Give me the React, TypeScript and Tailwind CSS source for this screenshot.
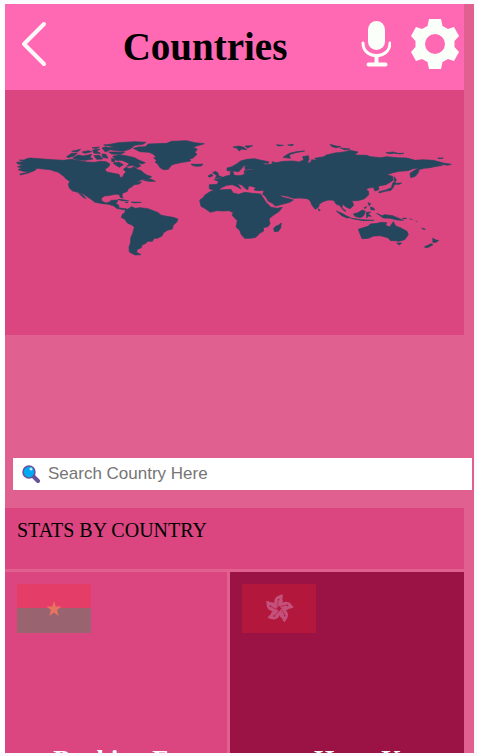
function WorldMap() {
  return (
    <svg viewBox="15 0 1377 390" className="block w-full" fill="#24475d" stroke="#24475d" strokeWidth="2" strokeLinejoin="round" role="img" aria-label="World map">
      {/* North and Central America */}
      <path d="M50 97 72 95 58 90 72 90 80 86 90 84 130 87 160 89 190 91 215 88 240 92 260 96 285 97 300 94 318 95 330 102 326 110 315 118 320 126 340 130 357 133 361 143 368 141 372 132 378 126 370 118 378 112 390 116 402 110 412 118 424 122 432 130 440 135 455 140 445 147 430 148 420 151 412 157 425 155 418 162 402 164 396 170 385 176 382 184 368 190 366 196 369 204 362 203 357 193 345 193 330 196 313 198 304 205 306 214 318 219 328 216 334 211 354 210 348 222 356 225 357 234 378 236 370 239 350 235 340 227 325 223 308 221 285 217 275 209 262 200 250 192 235 187 218 183 208 174 205 163 210 153 200 147 190 138 175 127 150 119 130 117 112 115 103 122 82 130 60 135 60 132 88 126 70 124 54 119 66 114 52 110 70 105 52 101Z" />
      <path d="M235 188 248 194 258 206 247 200ZM195 143 210 150 206 152ZM430 150 452 147 466 154 445 154ZM354 208 370 209 386 213 366 212ZM394 216 424 217 404 219ZM375 217 384 218Z" />
      {/* Arctic archipelago */}
      <path d="M200 80 215 70 232 70 222 78 204 83ZM218 84 235 75 250 78 275 73 270 82 279 87 255 91 232 89ZM215 64 242 58 232 66ZM246 66 265 62 275 65 255 70ZM278 60 300 57 290 64 302 70 282 70ZM282 77 298 75 308 87 290 88ZM306 54 318 50 329 60 316 66ZM306 72 318 73 324 85 308 82ZM276 53 298 51 288 56ZM311 45 335 42 355 38 405 35 438 37 428 43 404 46 392 56 370 64 350 62 330 59 318 52 345 53 330 48ZM326 66 348 66 374 67 362 73 335 72ZM338 79 358 74 382 78 404 83 416 90 436 98 426 102 414 98 422 108 412 113 398 106 380 109 388 101 376 95 364 91 348 91ZM340 100 356 96 370 104 358 112 348 106ZM335 85 344 88 344 97 335 94Z" />
      {/* Greenland and Iceland */}
      <path d="M400 55 416 51 436 50 445 42 500 40 515 34 560 32 585 38 613 41 600 45 590 48 580 52 592 58 585 67 591 73 579 84 569 87 572 93 548 97 527 101 515 105 505 118 490 119 479 112 474 103 465 96 470 91 461 84 469 82 459 72 447 67 420 65ZM573 102 590 103 609 102 604 108 588 109 577 106Z" />
      {/* South America */}
      <path d="M375 238 384 237 395 230 406 235 420 233 444 236 462 243 475 248 482 255 500 259 519 262 534 267 530 277 520 285 517 297 502 301 491 308 486 318 472 325 463 325 457 334 443 334 438 340 426 345 424 353 413 358 409 366 423 374 405 375 388 366 387 352 392 337 392 324 398 310 403 292 397 286 382 279 374 267 364 263 367 253 375 248Z" />
      {/* Eurasia */}
      <path d="M628 164 652 163 655 154 643 149 662 145 676 139 691 135 691 125 698 124 703 136 720 137 734 133 732 123 744 120 766 120 748 117 736 119 734 111 743 105 730 108 724 117 716 125 699 123 681 122 681 114 696 110 711 101 722 93 741 88 763 86 784 91 806 95 805 100 786 99 797 104 817 102 816 95 828 98 850 94 880 93 897 96 911 90 908 80 925 77 927 88 922 99 931 98 935 89 951 91 944 85 972 80 979 75 1005 69 1037 65 1050 61 1074 66 1064 75 1100 76 1112 80 1142 83 1160 80 1192 83 1220 84 1246 91 1267 89 1300 91 1330 99 1354 103 1342 106 1319 101 1328 106 1304 110 1290 113 1272 115 1256 119 1256 126 1246 139 1232 143 1230 130 1244 121 1256 114 1239 116 1224 122 1197 124 1179 128 1160 134 1178 139 1180 151 1158 164 1136 168 1136 179 1125 183 1120 172 1106 174 1098 178 1106 184 1106 195 1092 207 1073 212 1056 212 1061 226 1050 236 1038 231 1028 222 1026 233 1038 244 1032 242 1018 226 1009 223 1001 211 984 210 969 215 958 222 956 231 946 238 936 226 931 213 922 206 900 204 880 205 862 199 838 195 848 202 862 205 880 210 869 217 847 223 826 228 817 220 805 214 797 200 788 193 792 181 775 182 762 180 768 173 752 168 745 169 744 179 738 177 725 165 712 161 720 171 723 177 711 170 697 164 680 166 664 173 657 180 641 181 628 176Z" />
      <path d="M638 128 646 124 654 129 656 137 669 142 645 145 651 137ZM624 138 635 132 639 137 628 142ZM699 51 716 48 731 52 740 59 725 57 718 63 711 55ZM735 48 758 47 742 54ZM829 44 850 46 836 48ZM863 45 880 43 878 47ZM849 82 858 76 869 70 889 65 914 63 887 68 868 74 871 85ZM990 43 1008 48 1023 50 1008 53 996 50ZM1021 54 1050 57 1035 60ZM1158 68 1180 66 1190 69 1168 71ZM1186 70 1212 70 1200 72ZM1313 84 1330 84 1320 86Z" />
      {/* Africa and Madagascar */}
      <path d="M632 184 646 181 669 179 693 178 699 189 716 193 734 187 758 190 782 192 787 200 799 218 813 232 831 235 847 232 838 244 817 258 807 267 810 281 804 290 790 293 791 303 779 310 768 322 751 325 734 325 724 314 719 301 708 291 712 272 701 261 696 255 700 248 687 242 669 243 650 242 631 247 616 236 603 229 599 211 609 203 615 195ZM844 279 842 294 835 304 823 305 821 295 827 289 835 286Z" />
      {/* Japan and southeast Asia */}
      <path d="M1183 140 1189 150 1184 160 1205 159 1198 163 1184 163 1180 172 1173 181 1155 184 1137 189 1137 185 1158 180 1174 173 1178 160 1184 154ZM1009 243 1024 249 1040 258 1052 263 1041 264 1025 257ZM1053 265 1085 269 1122 271 1089 272ZM1060 252 1074 248 1087 240 1096 244 1091 257 1081 263 1065 259ZM1099 247 1112 246 1104 252 1114 259 1104 258 1100 264ZM1104 218 1112 221 1108 228ZM1111 231 1121 234 1124 240 1113 239ZM1093 232 1100 230 1095 236ZM1130 250 1146 257 1155 254 1178 257 1192 263 1210 271 1191 270 1171 265 1150 264ZM1208 264 1220 265 1210 267ZM955 236 961 241 957 243Z" />
      {/* Oceania */}
      <path d="M1075 298 1093 292 1104 289 1111 282 1132 280 1143 277 1160 278 1157 286 1169 291 1180 275 1187 288 1203 294 1221 304 1225 314 1214 329 1197 334 1185 332 1172 332 1163 323 1141 317 1121 318 1105 325 1086 326 1081 314ZM1190 339 1205 339 1198 345ZM1298 325 1310 331 1316 331 1310 336 1299 338ZM1274 350 1294 341 1299 344 1285 352 1275 353ZM1265 294 1276 298 1270 298ZM1228 266 1238 269M1247 273 1252 275" />
    </svg>
  );
}

function BurkinaFlag() {
  return (
    <svg viewBox="0 0 74 49" className="block h-[49px] w-[74px]" role="img" aria-label="Flag of Burkina Faso">
      <path fill="#e43e68" d="M0 0h74v24H0z" />
      <path fill="#99646f" d="M0 24h74v25H0z" />
      <path fill="#e77360" d="m37 17 1.8 5.500h5.800L40 26l1.700 6-4.700-3.500L32.300 32l1.700-6-4.600-3.500h5.800Z" />
    </svg>
  );
}

function HongKongFlag() {
  return (
    <svg viewBox="0 0 74 49" className="block h-[49px] w-[74px]" role="img" aria-label="Flag of Hong Kong">
      <path fill="#b3173b" d="M0 0h74v49H0z" />
      <g transform="translate(37 24.5)">
        {[4, 76, 148, 220, 292].map((angle) => (
          <g key={angle} transform={`rotate(${angle})`}>
            <path fill="#c4517b" d="M-1-1C-7-4-6-11-1-13c2-1 3-1 3-2 2 3 0 4 1 6 1 4 0 5-2 6-1 1-1 1-2 2Z" />
            <path d="M0 0C-2-3-2-6-1-9" fill="none" stroke="#b3173b" strokeWidth=".6" />
            <circle cx="-1" cy="-9" r=".8" fill="#b3173b" />
          </g>
        ))}
      </g>
    </svg>
  );
}

function BackIcon() {
  return (
    <svg viewBox="0 0 26 46" className="h-[46px] w-[26px]" fill="none" stroke="#fffafa" strokeWidth="4" strokeLinecap="round" strokeLinejoin="round" aria-hidden="true">
      <path d="M23 3 3 23l20 20" />
    </svg>
  );
}

function MicIcon() {
  return (
    <svg viewBox="0 0 30 46" className="h-[46px] w-[30px]" fill="none" stroke="#fbfffa" strokeWidth="3" strokeLinecap="round" aria-hidden="true">
      <rect x="7" y="0" width="17" height="29" rx="8.5" fill="#fbfffa" stroke="none" />
      <path d="M2 22c0 8 6 12.500 13.500 12.500S29 30 29 22" />
      <path d="M15.500 35v8M7.500 43.500h17" strokeWidth="4" />
    </svg>
  );
}

function GearIcon() {
  return (
    <svg viewBox="0 0 48 50" className="h-[50px] w-12" fill="#fbfffa" aria-hidden="true">
      <path fillRule="evenodd" d="M18 0h12l1.500 7 5.500 3 6-2 5 9-4.500 5v6l4.500 5-5 9-6-2-5.500 3L30 50H18l-1.500-7-5.500-3-6 2-5-9 4.500-5v-6L0 17l5-9 6 2 5.500-3Zm6 15a10 10 0 1 0 0 20 10 10 0 1 0 0-20Z" />
    </svg>
  );
}

function SearchIcon() {
  return (
    <svg viewBox="0 0 18 18" className="size-[18px] shrink-0" aria-hidden="true">
      <path d="m11 11 5 5" stroke="#65529a" strokeWidth="4" strokeLinecap="round" />
      <circle cx="7" cy="7" r="6" fill="#00a9f4" stroke="#65529a" strokeWidth="1.500" />
      <circle cx="9" cy="4" r="1.500" fill="#bcecff" />
    </svg>
  );
}

export default function App() {
  return (
    <div className="h-screen bg-[#f9fbff] pt-1 pr-[3px] pb-[3px] font-['Liberation_Serif',serif] text-black">
      <div className="h-full border-l-[5px] border-white">
        <div className="flex h-full flex-col overflow-hidden bg-[#e06090]">
          <header className="mr-[10px] flex h-[86px] shrink-0 items-center bg-[#ff69b4] pr-[5px] pb-[6px] pl-4">
            <button type="button" aria-label="Back"><BackIcon /></button>
            <h1 className="grow pt-[6px] pl-[2px] text-center text-[39px] leading-[44px] font-bold">Countries</h1>
            <div className="flex items-center gap-5">
              <button type="button" aria-label="Voice search"><MicIcon /></button>
              <button type="button" aria-label="Settings"><GearIcon /></button>
            </div>
          </header>
          <main className="flex min-h-0 grow flex-col">
            <section className="mr-[10px] shrink-0 bg-[#db4680] pt-10 pb-[75px]"><WorldMap /></section>
            <label className="mt-[123px] mr-[2px] ml-2 flex h-8 shrink-0 items-center gap-2 bg-white px-[9px]">
              <SearchIcon />
              <input type="text" aria-label="Search country" placeholder="Search Country Here" className="min-w-0 grow font-['Liberation_Sans',sans-serif] text-[17px] leading-6 outline-none placeholder:text-[#757575]" />
            </label>
            <h2 className="mt-[18px] mr-[10px] shrink-0 bg-[#db4680] px-3 pt-[11px] pb-[28px] text-[20px] leading-[22px]">STATS BY COUNTRY</h2>
            <section className="mt-[3px] mr-[10px] grid min-h-0 grow grid-cols-[19fr_20fr] gap-[3px] overflow-hidden">
              <article className="bg-[#db4680] px-3 pt-3">
                <BurkinaFlag />
                <h3 className="mt-[112px] pr-[11px] text-right text-[26px] leading-[30px] font-bold text-white">Burkina Faso</h3>
              </article>
              <article className="bg-[#9b1344] px-3 pt-3">
                <HongKongFlag />
                <h3 className="mt-[112px] pr-[10px] text-right text-[26px] leading-[30px] font-bold text-white">Hong Kong</h3>
              </article>
            </section>
          </main>
        </div>
      </div>
    </div>
  );
}
